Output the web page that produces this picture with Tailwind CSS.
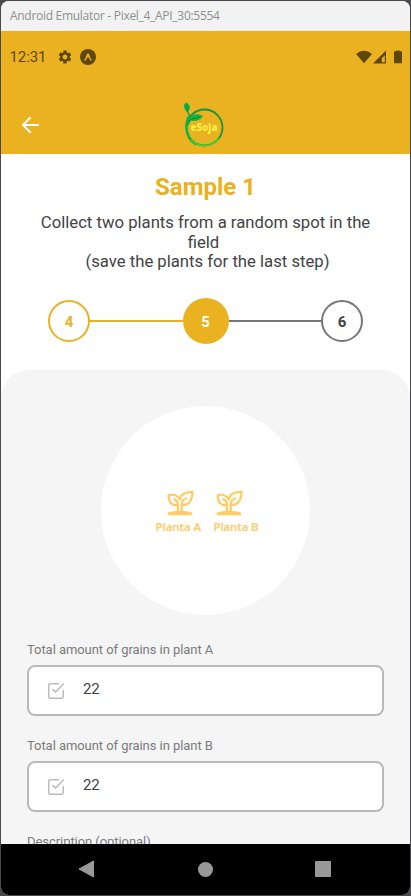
<!DOCTYPE html>
<html lang="en">
<head>
<meta charset="utf-8">
<title>eSoja</title>
<script src="https://cdn.jsdelivr.net/npm/@tailwindcss/browser@4"></script>
</head>
<body class="h-[896px] w-[411px] overflow-hidden bg-[#4a494c] p-px font-['Roboto',sans-serif]">
<div class="flex h-[894px] w-[409px] flex-col overflow-hidden rounded-lg bg-white">
  <div class="flex h-[30px] shrink-0 items-center bg-[#f2f2f2] pl-[9px] font-['Open_Sans',sans-serif] text-[12px] tracking-[-0.29px] whitespace-nowrap text-[#8f8f8f]">Android Emulator - Pixel_4_API_30:5554</div>

  <header class="h-[123px] shrink-0 bg-[#eab120] text-[#5e470d]">
    <div class="flex h-[52px] items-center pr-2 pl-[8.500px]">
      <span class="w-[48.500px] text-[15px] tracking-[-0.1px]">12:31</span>
      <svg class="-ml-[1px] size-4" viewBox="0 0 24 24" fill="currentColor"><path d="M19.14 12.94c.04-.3.06-.61.06-.94 0-.32-.02-.64-.07-.94l2.03-1.58c.18-.14.23-.41.12-.61l-1.92-3.32c-.12-.22-.37-.29-.59-.22l-2.39.96c-.5-.38-1.03-.7-1.62-.94l-.36-2.54c-.04-.24-.24-.41-.48-.41h-3.84c-.24 0-.43.17-.47.41l-.36 2.54c-.59.24-1.13.57-1.62.94l-2.39-.96c-.22-.08-.47 0-.59.22L2.74 8.87c-.12.21-.08.47.12.61l2.03 1.58c-.05.3-.09.63-.09.94s.02.64.07.94l-2.03 1.58c-.18.14-.23.41-.12.61l1.92 3.32c.12.22.37.29.59.22l2.39-.96c.5.38 1.03.7 1.62.94l.36 2.54c.05.24.24.41.48.41h3.84c.24 0 .44-.17.47-.41l.36-2.54c.59-.24 1.13-.56 1.62-.94l2.39.96c.22.08.47 0 .59-.22l1.92-3.32c.12-.22.07-.47-.12-.61l-2.01-1.58zM12 15.6c-1.98 0-3.6-1.62-3.6-3.6s1.62-3.6 3.6-3.6 3.6 1.62 3.6 3.6-1.62 3.6-3.6 3.6z"/></svg>
      <svg class="ml-[7px] size-4" viewBox="0 0 16 16"><circle cx="8" cy="8" r="8" fill="#5e470d"/><path d="M4 11.500C5.500 9.500 6.300 6.700 7 5Q8 3.600 9 5C9.700 6.700 10.500 9.500 12 11.500Q11.300 12.200 10.500 11.500L8 7.700L5.500 11.500Q4.700 12.200 4 11.500Z" fill="#eab120"/></svg>
      <svg class="ml-auto h-[14px] w-[47px]" viewBox="0 0 47 14" fill="currentColor"><path d="M1 4Q9 -2.500 17 4L9 13.300Z"/><path d="M31 .5V13.500H18ZM29.800 5.200L26.800 8.200V12.300H29.800Z" fill-rule="evenodd"/><path d="M41.500 1.300V.6H44.500V1.300H47V13.300H39V1.300Z"/></svg>
    </div>
    <div class="grid h-[71px] grid-cols-[1fr_46px_1fr] items-center px-[20px]">
      <svg class="mt-[13px] size-[20px]" viewBox="0 0 20 20" fill="none" stroke="#fff" stroke-width="2" stroke-linecap="square"><path d="M2.500 10H17M9 3L2 10L9 17"/></svg>
      <svg class="mt-[7px] -ml-[1px] h-[50px] w-[46px]" viewBox="1 -2.500 46 50" fill="none">
        <circle cx="23.500" cy="28" r="18" stroke="#149447" stroke-width="1.800"/>
        <path d="M7.500 17C3 28 6 41 16 45" stroke="#0cb545" stroke-width="2.400"/>
        <path d="M10 40C18 48.500 31 48 38 39" stroke="#55cd2e" stroke-width="1.500"/>
        <path d="M15 42C24 46 33 43 38 36" stroke="#a6d52b" stroke-width="1"/>
        <path d="M7 25C10 21 9 16 7 13" stroke="#08a93e" stroke-width="1.500"/>
        <path d="M6.500 13C2 9 2 5 5 3C9.500 5 10.500 9 6.500 13Z" fill="#10b545"/>
        <path d="M8 20.500C10 14.500 17 13.500 22 16.500C19 21.500 13 22.500 8 20.500Z" fill="#10b545"/>
        <path d="M5.500 5L6.500 13M7 22C11 19 15 18 19 17.500" stroke="#0b7434" stroke-width=".7"/>
        <text x="23" y="31" text-anchor="middle" textLength="27" lengthAdjust="spacingAndGlyphs" font-family="Open Sans, sans-serif" font-size="10.500" font-weight="800" fill="#f5ed43">eSoja</text>
      </svg>
    </div>
  </header>

  <section class="h-[216px] shrink-0 pt-[18px] text-center">
    <h1 class="text-[24px] leading-[30px] font-bold text-[#eab120]">Sample 1</h1>
    <p class="mt-[11px] h-[60px] text-[16.700px] leading-[19.600px] text-[#434343]">Collect two plants from a random spot in the<br><span class="relative -left-[2px]">field</span><br><span class="relative left-[2px]">(save the plants for the last step)</span></p>
    <div class="mx-[47px] mt-[25px] flex h-[46px] items-center text-[15px] font-bold">
      <div class="flex size-[42px] shrink-0 items-center justify-center rounded-full border-2 border-[#eab120] pt-[2px] text-[#eab120]">4</div>
      <div class="h-[2px] flex-1 bg-[#eab120]"></div>
      <div class="flex size-[46px] shrink-0 items-center justify-center rounded-full bg-[#eab120] pt-[2px] text-white">5</div>
      <div class="h-[2px] flex-1 bg-[#777]"></div>
      <div class="flex size-[42px] shrink-0 items-center justify-center rounded-full border-2 border-[#777] pt-[2px] text-[#434343]">6</div>
    </div>
  </section>

  <main class="min-h-0 flex-1 overflow-hidden rounded-t-[28px] bg-[#f5f5f5] px-[26px] pt-[36px]">
    <div class="mx-auto flex size-[209px] items-center justify-center rounded-full bg-white">
      <svg class="h-[50px] w-[110px]" viewBox="0 0 110 50" fill="none">
        <defs>
          <g id="plant">
            <path d="M1.200 4.800C5 3 10 4.500 12.500 9C13 4 18 1.200 25 1.300C24.800 9 22 15 14.500 14.500M1.200 4.800C1.200 11 3.500 15.500 10.300 14.500M10.300 22V13C10 10.800 9 9.500 7 8.800M14.200 22V14C14.300 10.500 16.500 8.500 18.800 8" stroke="#ffcc66" stroke-width="2.300" stroke-linejoin="round" stroke-linecap="round"/>
            <path d="M.3 24.800V22.500Q1 21.500 6 20.700Q12.500 20 19 20.700Q24 21.500 24.700 22.500V24.800Z" fill="#ffcc66"/>
          </g>
        </defs>
        <use href="#plant" x="16.500" y="4.500"/>
        <use href="#plant" x="65.500" y="4.500"/>
        <g font-family="Open Sans, sans-serif" font-size="10.500" font-weight="600" fill="#ffcc66" stroke="#ffcc66" stroke-width=".2">
          <text x="4.500" y="45" textLength="45.500" lengthAdjust="spacingAndGlyphs">Planta A</text>
          <text x="62.500" y="45" textLength="45" lengthAdjust="spacingAndGlyphs">Planta B</text>
        </g>
      </svg>
    </div>
    <div class="mt-[25px] flex flex-col">
      <label class="h-[25px] text-[13px] leading-[20px] tracking-[-0.06px] text-[#7b7b7b]">Total amount of grains in plant A</label>
      <div class="flex h-[51px] w-[357px] items-center rounded-[8px] border-2 border-[#b9b9b9] bg-white pl-[18px]">
        <svg class="size-[18px]" viewBox="0 0 18 18" fill="none" stroke="#bbb" stroke-width="1.500" stroke-linecap="round" stroke-linejoin="round"><path d="M6 7.500L8.500 10L16.500 2M16.200 8.500V14.700Q16.200 16.200 14.700 16.200H3.200Q1.700 16.200 1.700 14.700V3.200Q1.700 1.700 3.200 1.700H11.500"/></svg>
        <span class="-mt-[3px] ml-[18px] text-[15px] tracking-[-0.2px] text-[#434343]">22</span>
      </div>
      <label class="mt-[20px] h-[25px] text-[13px] leading-[20px] tracking-[-0.06px] text-[#7b7b7b]">Total amount of grains in plant B</label>
      <div class="flex h-[51px] w-[357px] items-center rounded-[8px] border-2 border-[#b9b9b9] bg-white pl-[18px]">
        <svg class="size-[18px]" viewBox="0 0 18 18" fill="none" stroke="#bbb" stroke-width="1.500" stroke-linecap="round" stroke-linejoin="round"><path d="M6 7.500L8.500 10L16.500 2M16.200 8.500V14.700Q16.200 16.200 14.700 16.200H3.200Q1.700 16.200 1.700 14.700V3.200Q1.700 1.700 3.200 1.700H11.500"/></svg>
        <span class="-mt-[3px] ml-[18px] text-[15px] tracking-[-0.2px] text-[#434343]">22</span>
      </div>
      <label class="mt-[20px] text-[13px] leading-[20px] tracking-[-0.06px] text-[#7b7b7b]">Description (optional)</label>
    </div>
  </main>

  <nav class="flex h-[51px] shrink-0 items-center justify-between bg-black pr-[79px] pb-px pl-[77px]">
    <svg class="h-[18px] w-[16px]" viewBox="0 0 16 18"><path d="M1 9L15.500 1V17Z" fill="#999" stroke="#999" stroke-linejoin="round"/></svg>
    <div class="ml-[2px] size-[15px] rounded-full bg-[#999]"></div>
    <div class="size-4 rounded-[1px] bg-[#999]"></div>
  </nav>
</div>
</body>
</html>
